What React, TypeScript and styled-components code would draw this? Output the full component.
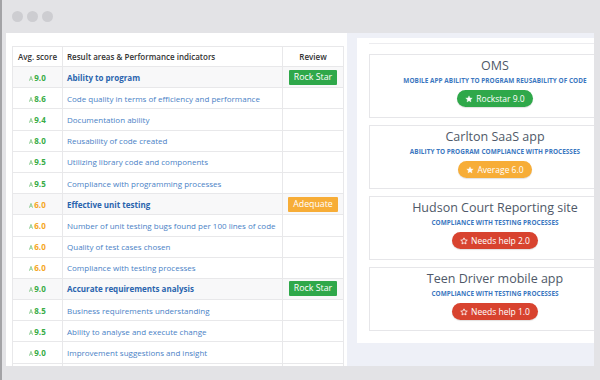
import { createGlobalStyle } from "styled-components";
import styled from "styled-components";

const GlobalStyle = createGlobalStyle`
  html, body {
    margin: 0;
    padding: 0;
    background: #e3e3e6;
    font-family: "Open Sans", "Liberation Sans", sans-serif;
  }
`;

type Tone = "green" | "orange" | "red";

const toneColor: Record<Tone, string> = {
  green: "#2fa84a",
  orange: "#f7ad37",
  red: "#d8432f",
};

const scoreColor: Record<string, string> = {
  green: "#38ac46",
  orange: "#f5a623",
};

const Frame = styled.div`
  width: 600px;
  height: 380px;
  box-sizing: border-box;
  border-left: 2px solid #a3a3a6;
  background: #e3e3e6;
  display: flex;
  flex-direction: column;
  overflow: hidden;
`;

const TitleBar = styled.div`
  height: 33px;
  flex-shrink: 0;
  display: flex;
  align-items: center;
  gap: 4px;
  padding-left: 10px;
`;

const Dot = styled.span`
  width: 11px;
  height: 11px;
  border-radius: 50%;
  background: #cdcdd1;
`;

const Window = styled.div`
  height: 333px;
  margin: 0 6px 0 4px;
  background: #eef0f7;
  display: flex;
  gap: 10px;
  overflow: hidden;
`;

const LeftPanel = styled.div`
  width: 341px;
  flex-shrink: 0;
  background: #fff;
  box-sizing: border-box;
  padding: 13px 4px 0 6px;
  overflow: hidden;
`;

const Table = styled.table`
  width: 331px;
  border-collapse: collapse;
  table-layout: fixed;
  font-size: 8px;
`;

const HeadCell = styled.th<{ $align?: string }>`
  height: 19px;
  padding: 0 4px;
  border: 1px solid #e8e8ea;
  font-weight: 600;
  color: #333;
  text-align: ${(p) => p.$align || "left"};
  white-space: nowrap;
`;

const Row = styled.tr<{ $head?: boolean }>`
  height: 21.2px;
  background: ${(p) => (p.$head ? "#f8f8f9" : "#fff")};
`;

const ScoreCell = styled.td<{ $tone: string }>`
  border: 1px solid #e8e8ea;
  padding: 0;
  text-align: center;
  font-weight: 700;
  color: ${(p) => scoreColor[p.$tone] || "#38ac46"};
  white-space: nowrap;
`;

const Arrow = styled.svg`
  width: 4px;
  height: 5px;
  margin-right: 1px;
  vertical-align: 0px;
`;

const TextCell = styled.td<{ $head?: boolean }>`
  border: 1px solid #e8e8ea;
  padding: 0 4px;
  color: ${(p) => (p.$head ? "#2a64ae" : "#4a82c6")};
  font-weight: ${(p) => (p.$head ? 700 : 400)};
  white-space: nowrap;
  overflow: hidden;
`;

const ReviewCell = styled.td`
  border: 1px solid #e8e8ea;
  padding: 0;
  text-align: center;
`;

const Badge = styled.span<{ $tone: Tone }>`
  display: inline-block;
  padding: 0 5px;
  height: 15px;
  line-height: 15px;
  border-radius: 1px;
  background: ${(p) => toneColor[p.$tone]};
  color: #fff;
  font-size: 8.8px;
`;

const RightPanel = styled.div`
  width: 276px;
  height: 305px;
  flex-shrink: 0;
  margin-top: 5px;
  background: #fff;
  box-sizing: border-box;
  padding: 5px 0 0 12px;
`;

const PanelRule = styled.div`
  border-top: 1px solid #ececef;
  height: 10px;
`;

const Cards = styled.div`
  display: flex;
  flex-direction: column;
  gap: 7px;
`;

const Card = styled.div`
  width: 252px;
  height: 64px;
  box-sizing: border-box;
  border: 1px solid #e6e6e9;
  display: flex;
  flex-direction: column;
  align-items: center;
  padding-top: 2px;
`;

const CardTitle = styled.div`
  font-size: 12.5px;
  line-height: 18px;
  color: #4f5968;
`;

const CardSub = styled.div`
  font-size: 6.4px;
  font-weight: 700;
  color: #3b77c0;
  letter-spacing: 0.05px;
  line-height: 9px;
  margin-top: 1px;
  white-space: nowrap;
`;

const Pill = styled.span<{ $tone: Tone }>`
  margin-top: 5px;
  height: 17px;
  padding: 0 8px;
  border-radius: 9px;
  background: ${(p) => toneColor[p.$tone]};
  color: #fff;
  font-size: 8.5px;
  display: inline-flex;
  align-items: center;
  gap: 3px;
  box-shadow: 0 1px 1px rgba(0, 0, 0, 0.12);
`;

const StarIcon = ({ filled }: { filled: boolean }) => (
  <svg width="8" height="8" viewBox="0 0 24 24">
    <path
      d="M12 2.5l2.9 6.3 6.9.7-5.2 4.6 1.5 6.8L12 17.4l-6.1 3.5 1.5-6.8-5.2-4.6 6.9-.7z"
      fill={filled ? "#fff" : "none"}
      stroke="#fff"
      strokeWidth={filled ? 1 : 2.4}
      strokeLinejoin="round"
    />
  </svg>
);

type Item = { score: string; tone: string; text: string; head?: boolean; review?: [string, Tone] };

const rows: Item[] = [
  { score: "9.0", tone: "green", text: "Ability to program", head: true, review: ["Rock Star", "green"] },
  { score: "8.6", tone: "green", text: "Code quality in terms of efficiency and performance" },
  { score: "9.4", tone: "green", text: "Documentation ability" },
  { score: "8.0", tone: "green", text: "Reusability of code created" },
  { score: "9.5", tone: "green", text: "Utilizing library code and components" },
  { score: "9.5", tone: "green", text: "Compliance with programming processes" },
  { score: "6.0", tone: "orange", text: "Effective unit testing", head: true, review: ["Adequate", "orange"] },
  { score: "6.0", tone: "orange", text: "Number of unit testing bugs found per 100 lines of code" },
  { score: "6.0", tone: "orange", text: "Quality of test cases chosen" },
  { score: "6.0", tone: "orange", text: "Compliance with testing processes" },
  { score: "9.0", tone: "green", text: "Accurate requirements analysis", head: true, review: ["Rock Star", "green"] },
  { score: "8.5", tone: "green", text: "Business requirements understanding" },
  { score: "9.5", tone: "green", text: "Ability to analyse and execute change" },
  { score: "9.0", tone: "green", text: "Improvement suggestions and insight" },
];

const projects: { title: string; sub: string; label: string; tone: Tone; filled: boolean }[] = [
  { title: "OMS", sub: "MOBILE APP ABILITY TO PROGRAM REUSABILITY OF CODE", label: "Rockstar 9.0", tone: "green", filled: true },
  { title: "Carlton SaaS app", sub: "ABILITY TO PROGRAM COMPLIANCE WITH PROCESSES", label: "Average 6.0", tone: "orange", filled: true },
  { title: "Hudson Court Reporting site", sub: "COMPLIANCE WITH TESTING PROCESSES", label: "Needs help 2.0", tone: "red", filled: false },
  { title: "Teen Driver mobile app", sub: "COMPLIANCE WITH TESTING PROCESSES", label: "Needs help 1.0", tone: "red", filled: false },
];

export default function App() {
  return (
    <>
      <GlobalStyle />
      <Frame>
        <TitleBar>
          <Dot />
          <Dot />
          <Dot />
        </TitleBar>
        <Window>
          <LeftPanel>
            <Table>
              <colgroup>
                <col style={{ width: 50 }} />
                <col style={{ width: 220 }} />
                <col style={{ width: 61 }} />
              </colgroup>
              <thead>
                <tr>
                  <HeadCell $align="center">Avg. score</HeadCell>
                  <HeadCell>Result areas &amp; Performance indicators</HeadCell>
                  <HeadCell $align="center">Review</HeadCell>
                </tr>
              </thead>
              <tbody>
                {rows.map((r, i) => (
                  <Row key={i} $head={r.head}>
                    <ScoreCell $tone={r.tone}>
                      <Arrow viewBox="0 0 4 5">
                        <path d="M0.3 4.8L2 0.4 3.7 4.8M1 3.2h2" fill="none" stroke="#7cc483" strokeWidth="0.8" />
                      </Arrow>
                      {r.score}
                    </ScoreCell>
                    <TextCell $head={r.head}>{r.text}</TextCell>
                    <ReviewCell>
                      {r.review && <Badge $tone={r.review[1]}>{r.review[0]}</Badge>}
                    </ReviewCell>
                  </Row>
                ))}
                <Row>
                  <ScoreCell $tone="green" />
                  <TextCell />
                  <ReviewCell />
                </Row>
              </tbody>
            </Table>
          </LeftPanel>
          <RightPanel>
            <PanelRule />
            <Cards>
              {projects.map((p) => (
                <Card key={p.title}>
                  <CardTitle>{p.title}</CardTitle>
                  <CardSub>{p.sub}</CardSub>
                  <Pill $tone={p.tone}>
                    <StarIcon filled={p.filled} />
                    {p.label}
                  </Pill>
                </Card>
              ))}
            </Cards>
          </RightPanel>
        </Window>
      </Frame>
    </>
  );
}
